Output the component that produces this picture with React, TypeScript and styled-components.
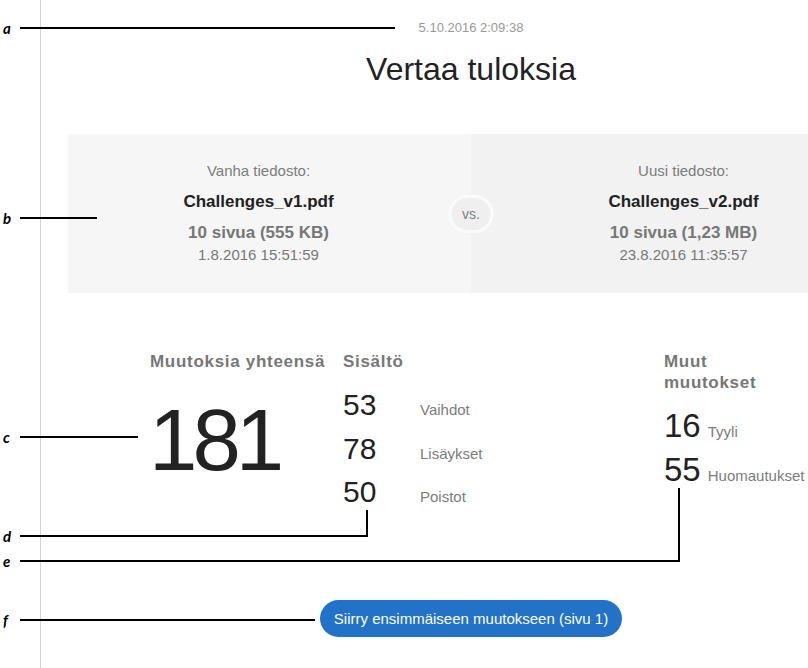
import React from 'react';
import styled, { createGlobalStyle } from 'styled-components';

const GlobalStyle = createGlobalStyle`
  html, body {
    margin: 0;
    padding: 0;
    overflow: hidden;
    background: #fff;
  }
  body {
    font-family: "Liberation Sans", Arial, sans-serif;
    color: #222;
  }
`

const Page = styled.div`
  position: relative;
  display: flex;
  height: 100vh;
  overflow: hidden;
`
const Gutter = styled.div`
  flex: 0 0 40px;
  border-right: 1px solid #d2d2d2;
`
const Main = styled.main`
  flex: 0 0 806px;
  padding-left: 27px;
`
const Stamp = styled.div`
  margin-top: 20px;
  text-align: center;
  font-size: 13px;
  line-height: 16px;
  color: #999;
`
const Title = styled.h1`
  margin: 13px 0 0;
  text-align: center;
  font-size: 32px;
  line-height: 40px;
  font-weight: 400;
  color: #222;
`
const FilePanel = styled.section`
  position: relative;
  display: grid;
  grid-template-columns: 1fr 1fr;
  margin-top: 45px;
`
const FileCard = styled.div<{ $side: 'left' | 'right' }>`
  display: flex;
  flex-direction: column;
  align-items: center;
  padding: 26px 0 27px;
  padding-${p => (p.$side === 'left' ? 'right' : 'left')}: 22px;
  background: ${p => (p.$side === 'left' ? '#f6f6f6' : '#f2f2f2')};
`
const FileLabel = styled.div`
  font-size: 15px;
  line-height: 22px;
  color: #7c7c7c;
`
const FileName = styled.div`
  margin-top: 9px;
  font-size: 17px;
  line-height: 22px;
  font-weight: 700;
  color: #222;
`
const FileSize = styled.div`
  margin-top: 9px;
  font-size: 17px;
  line-height: 22px;
  font-weight: 700;
  color: #777;
`
const FileDate = styled.div`
  font-size: 15px;
  line-height: 22px;
  color: #777;
`
const VsBadge = styled.div`
  position: absolute;
  left: 50%;
  top: 50%;
  transform: translate(-50%, -50%);
  box-sizing: border-box;
  width: 45px;
  height: 38px;
  display: flex;
  align-items: center;
  justify-content: center;
  border: 3px solid #fbfbfb;
  border-radius: 19px;
  background: #efefef;
  font-size: 14px;
  color: #808080;
`
const Stats = styled.section`
  display: grid;
  grid-template-columns: 193px 321px 1fr;
  margin-top: 58px;
  padding-left: 82px;
`
const StatHeading = styled.h2`
  margin: 0;
  font-size: 17px;
  line-height: 21px;
  font-weight: 700;
  letter-spacing: 0.7px;
  color: #777;
`
const NarrowHeading = styled(StatHeading)`
  width: 110px;
`
const TotalNumber = styled.div`
  margin: 25px 0 0 -1px;
  font-size: 87px;
  line-height: 86px;
  letter-spacing: -5px;
  color: #222;
`
const ContentGrid = styled.div`
  display: grid;
  grid-template-columns: 77px auto;
  align-items: baseline;
  margin-top: 11px;
`
const Count = styled.div`
  font-size: 30px;
  line-height: 43.5px;
  color: #222;
`
const CountLabel = styled.div`
  font-size: 15px;
  color: #7c7c7c;
`
const OtherRow = styled.div`
  display: flex;
  align-items: baseline;
  gap: 7px;
  white-space: nowrap;
`
const OtherCount = styled.div`
  font-size: 33px;
  line-height: 44px;
  color: #222;
`
const OtherList = styled.div`
  margin-top: 11px;
`
const ButtonRow = styled.div`
  display: flex;
  justify-content: center;
  margin-top: 86px;
`
const GoButton = styled.button`
  height: 37px;
  padding: 0 14px;
  border: 0;
  border-radius: 19px;
  background: #2272c8;
  color: #fff;
  font-family: "Liberation Sans", Arial, sans-serif;
  font-size: 15px;
  cursor: pointer;
`

/* annotation overlay: letters + leader lines drawn over the screenshot */
const Callout = styled.div<{ $y: number }>`
  position: absolute;
  left: 0;
  top: ${p => p.$y - 10}px;
  display: flex;
  align-items: center;
  height: 20px;
`
const Letter = styled.span`
  width: 20px;
  padding-left: 3px;
  box-sizing: border-box;
  font-family: Lato, "Open Sans", sans-serif;
  font-style: italic;
  font-weight: 700;
  font-size: 15px;
  color: #000;
`
const Leader = styled.span<{ $len: number; $rise?: number }>`
  position: relative;
  width: ${p => p.$len}px;
  height: 2px;
  background: #000;
  &::after {
    content: '';
    display: ${p => (p.$rise ? 'block' : 'none')};
    position: absolute;
    right: 0;
    bottom: 0;
    width: 2px;
    height: ${p => p.$rise ?? 0}px;
    background: #000;
  }
`

const callouts = [
  { id: 'a', y: 28, len: 375 },
  { id: 'b', y: 218, len: 77 },
  { id: 'c', y: 437, len: 118 },
  { id: 'd', y: 536, len: 348, rise: 27 },
  { id: 'e', y: 561, len: 660, rise: 74 },
  { id: 'f', y: 620, len: 295 },
]

const content = [
  { n: 53, label: 'Vaihdot' },
  { n: 78, label: 'Lisäykset' },
  { n: 50, label: 'Poistot' },
]

const others = [
  { n: 16, label: 'Tyyli' },
  { n: 55, label: 'Huomautukset' },
]

export default function App() {
  return (
    <Page>
      <GlobalStyle />
      <Gutter />
      <Main>
        <Stamp>5.10.2016 2:09:38</Stamp>
        <Title>Vertaa tuloksia</Title>
        <FilePanel>
          <FileCard $side="left">
            <FileLabel>Vanha tiedosto:</FileLabel>
            <FileName>Challenges_v1.pdf</FileName>
            <FileSize>10 sivua (555 KB)</FileSize>
            <FileDate>1.8.2016 15:51:59</FileDate>
          </FileCard>
          <FileCard $side="right">
            <FileLabel>Uusi tiedosto:</FileLabel>
            <FileName>Challenges_v2.pdf</FileName>
            <FileSize>10 sivua (1,23 MB)</FileSize>
            <FileDate>23.8.2016 11:35:57</FileDate>
          </FileCard>
          <VsBadge>vs.</VsBadge>
        </FilePanel>
        <Stats>
          <div>
            <StatHeading>Muutoksia yhteensä</StatHeading>
            <TotalNumber>181</TotalNumber>
          </div>
          <div>
            <StatHeading>Sisältö</StatHeading>
            <ContentGrid>
              {content.map(c => (
                <React.Fragment key={c.label}>
                  <Count>{c.n}</Count>
                  <CountLabel>{c.label}</CountLabel>
                </React.Fragment>
              ))}
            </ContentGrid>
          </div>
          <div>
            <NarrowHeading>Muut muutokset</NarrowHeading>
            <OtherList>
              {others.map(o => (
                <OtherRow key={o.label}>
                  <OtherCount>{o.n}</OtherCount>
                  <CountLabel>{o.label}</CountLabel>
                </OtherRow>
              ))}
            </OtherList>
          </div>
        </Stats>
        <ButtonRow>
          <GoButton>Siirry ensimmäiseen muutokseen (sivu 1)</GoButton>
        </ButtonRow>
      </Main>
      {callouts.map(c => (
        <Callout key={c.id} $y={c.y}>
          <Letter>{c.id}</Letter>
          <Leader $len={c.len} $rise={c.rise} />
        </Callout>
      ))}
    </Page>
  )
}
